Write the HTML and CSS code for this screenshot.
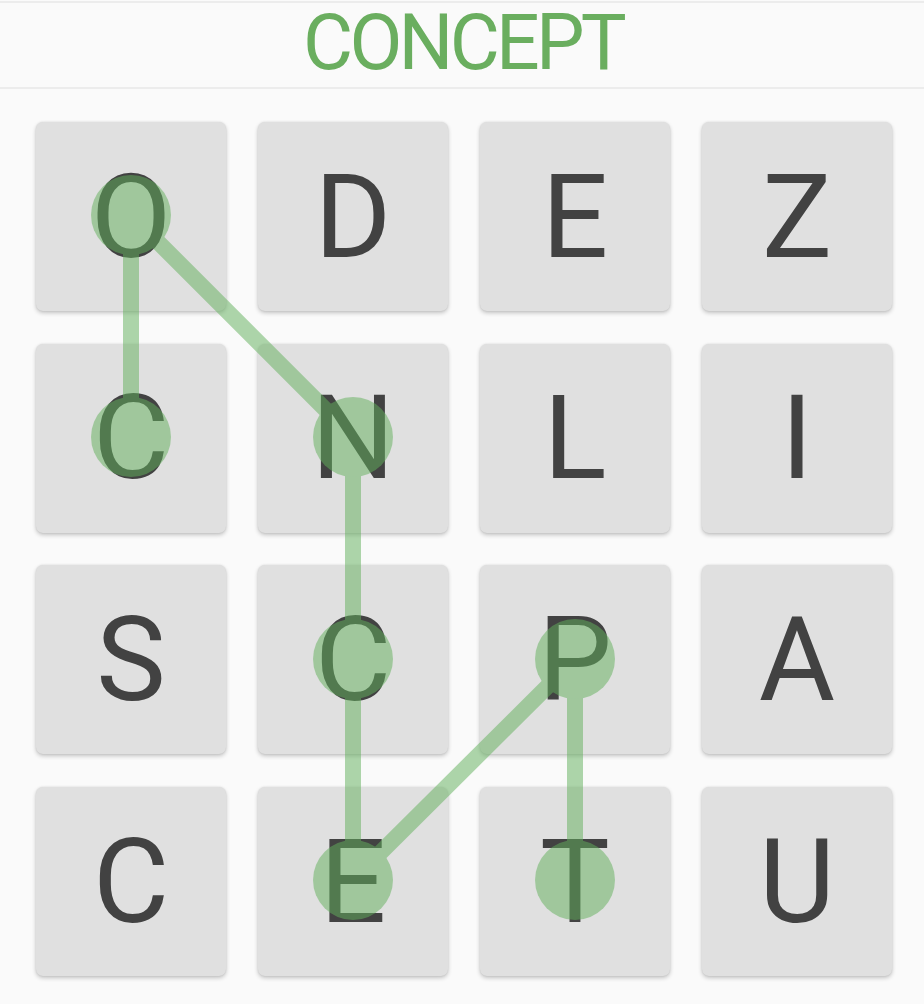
FILE: index.html
```html
<!DOCTYPE html>
<html>
<head>
<meta charset="utf-8">
<link rel="stylesheet" href="styles.css">
</head>
<body>
<div class="page">
  <header class="header"><span class="title">CONCEPT</span></header>
  <main class="board">
    <div class="grid">
      <div class="tile">O</div><div class="tile">D</div><div class="tile">E</div><div class="tile">Z</div>
      <div class="tile">C</div><div class="tile">N</div><div class="tile">L</div><div class="tile">I</div>
      <div class="tile">S</div><div class="tile">C</div><div class="tile">P</div><div class="tile">A</div>
      <div class="tile">C</div><div class="tile">E</div><div class="tile">T</div><div class="tile">U</div>
      <svg class="trace" viewBox="0 0 856 853" width="856" height="853">
        <g opacity="0.51" fill="rgb(99,177,93)" stroke="rgb(99,177,93)" stroke-width="16" stroke-linecap="butt">
          <polyline fill="none" points="95,315 95,93 317,315 317,537 317,758 539,537 539,758"/>
          <circle cx="95" cy="315" r="40" stroke="none"/>
          <circle cx="95" cy="93" r="40" stroke="none"/>
          <circle cx="317" cy="315" r="40" stroke="none"/>
          <circle cx="317" cy="537" r="40" stroke="none"/>
          <circle cx="317" cy="758" r="40" stroke="none"/>
          <circle cx="539" cy="537" r="40" stroke="none"/>
          <circle cx="539" cy="758" r="40" stroke="none"/>
        </g>
      </svg>
    </div>
  </main>
</div>
</body>
</html>
```
FILE: styles.css
```css
html, body {
  margin: 0;
  padding: 0;
  background: #fafafa;
}
body {
  font-family: Roboto, "Liberation Sans", sans-serif;
  width: 924px;
  height: 1004px;
  overflow: hidden;
}
.page {
  padding-top: 1px;
}
.header {
  border-top: 2px solid #ececec;
  border-bottom: 2px solid #ececec;
  height: 84px;
  display: flex;
  align-items: center;
  justify-content: center;
}
.title {
  color: #6aae5f;
  font-size: 77px;
  line-height: 1;
  letter-spacing: -3.8px;
  display: inline-block;
  margin-bottom: 3px;
  margin-left: 2px;
}
.board {
  padding: 33px 32px 0 36px;
}
.grid {
  position: relative;
  display: grid;
  grid-template-columns: repeat(4, 190px);
  grid-template-rows: repeat(4, 189px);
  column-gap: 32px;
  row-gap: 32.7px;
  width: 856px;
}
.tile {
  background: #e0e0e0;
  border-radius: 7px;
  box-shadow: 0 2px 4px rgba(0, 0, 0, 0.22), 0 0 2px rgba(0, 0, 0, 0.1);
  display: flex;
  align-items: center;
  justify-content: center;
  color: #424242;
  font-size: 117px;
}
.trace {
  position: absolute;
  left: 0;
  top: 0;
  pointer-events: none;
}
```
